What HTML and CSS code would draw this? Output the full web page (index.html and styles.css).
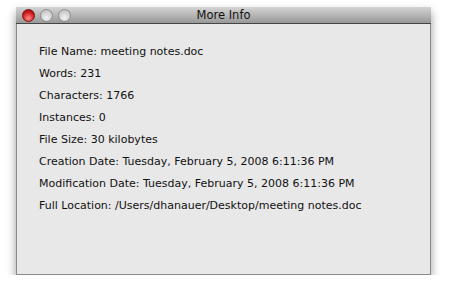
FILE: index.html
```html
<!DOCTYPE html>
<html lang="en">
<head>
    <meta charset="UTF-8">
    <title>More Info</title>
    <link rel="stylesheet" href="styles.css">
</head>
<body>
    <div class="window">
        <div class="titlebar">
            <div class="lights">
                <span class="light close"></span>
                <span class="light"></span>
                <span class="light"></span>
            </div>
            <div class="title">More Info</div>
        </div>
        <div class="content">
            <p>File Name: meeting notes.doc</p>
            <p>Words: 231</p>
            <p>Characters: 1766</p>
            <p>Instances: 0</p>
            <p>File Size: 30 kilobytes</p>
            <p>Creation Date: Tuesday, February 5, 2008 6:11:36 PM</p>
            <p>Modification Date: Tuesday, February 5, 2008 6:11:36 PM</p>
            <p>Full Location: /Users/dhanauer/Desktop/meeting notes.doc</p>
        </div>
    </div>
</body>
</html>
```

FILE: styles.css
```css
body {
    background-color: #ffffff;
    margin: 0;
    padding: 7px 0 0 16px;
    font-family: "DejaVu Sans", sans-serif;
}
.window {
    width: 415px;
    height: 268px;
    background-color: #e8e8e8;
    border: 1px solid #8a8a8a;
    border-top: none;
    box-sizing: border-box;
    box-shadow: 0 5px 9px rgba(0, 0, 0, 0.4);
    display: flex;
    flex-direction: column;
}
.titlebar {
    position: relative;
    height: 16px;
    background: linear-gradient(#d4d4d4, #989898);
    border-bottom: 1px solid #454545;
    display: flex;
    align-items: center;
    justify-content: center;
    margin: 0 -1px;
}
.lights {
    position: absolute;
    left: 6px;
    top: 2px;
    display: flex;
    gap: 5px;
}
.light {
    width: 13px;
    height: 13px;
    border-radius: 50%;
    box-sizing: border-box;
    border: 1px solid #8c8c8c;
    background: radial-gradient(circle at 50% 70%, #f2f2f2, #b8b8b8);
}
.light.close {
    border-color: #7a1010;
    background: radial-gradient(circle at 50% 75%, #ff8c8c, #d11a1a 60%, #8e0a0a);
}
.title {
    font-size: 11.5px;
    color: #111111;
}
.content {
    padding: 17px 0 0 22px;
}
.content p {
    margin: 0;
    height: 22px;
    line-height: 22px;
    font-size: 11px;
    color: #111111;
}
```
